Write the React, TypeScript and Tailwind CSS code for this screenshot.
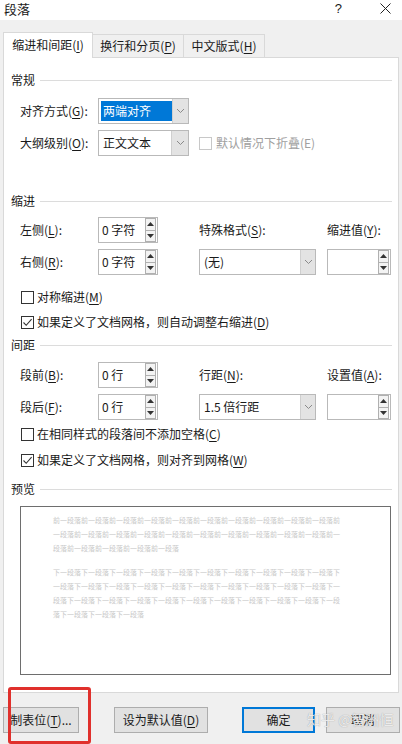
import React from "react";

const U = ({ c }: { c: string }) => (
  <span className="underline underline-offset-[2px] decoration-[1px]">{c}</span>
);

function CheckBox({ checked, disabled }: { checked?: boolean; disabled?: boolean }) {
  return (
    <div
      className={
        disabled
          ? "w-[13px] h-[13px] border border-[#c8c8c8] bg-white flex items-center justify-center"
          : "w-[13px] h-[13px] border border-[#333333] bg-white flex items-center justify-center"
      }
    >
      {checked && (
        <svg width="11" height="11" viewBox="0 0 11 11">
          <polyline points="1.5,5.5 4.2,8.3 9.6,2.2" fill="none" stroke="#333" strokeWidth="1.1" />
        </svg>
      )}
    </div>
  );
}

function Spinner() {
  return (
    <div className="flex flex-col h-[24px] w-[11px] mr-[1px]">
      <div className="flex-1 border border-[#b0b0b0] bg-[#f3f3f3] flex items-center justify-center">
        <svg width="7" height="4" viewBox="0 0 7 4">
          <polygon points="0,4 7,4 3.5,0" fill="#333" />
        </svg>
      </div>
      <div className="flex-1 border border-t-0 border-[#b0b0b0] bg-[#f3f3f3] flex items-center justify-center">
        <svg width="7" height="4" viewBox="0 0 7 4">
          <polygon points="0,0 7,0 3.5,4" fill="#333" />
        </svg>
      </div>
    </div>
  );
}

function SpinBox({ value, wide }: { value?: string; wide?: boolean }) {
  return (
    <div
      className={
        (wide ? "w-[60px]" : "w-[64px]") +
        " h-[26px] border border-[#b9b9b9] bg-white flex items-center justify-between pl-[3px]"
      }
    >
      <span className="text-[12px] leading-[16px] whitespace-pre">{value ?? ""}</span>
      <Spinner />
    </div>
  );
}

function Chevron() {
  return (
    <svg width="9" height="6" viewBox="0 0 9 6">
      <polyline points="1,1 4.5,4.5 8,1" fill="none" stroke="#8a8a8a" strokeWidth="1" />
    </svg>
  );
}

function Dropdown({
  value,
  selected,
  className,
  btnW,
}: {
  value: string;
  selected?: boolean;
  className: string;
  btnW: string;
}) {
  return (
    <div className={className + " h-[26px] border border-[#b9b9b9] bg-white flex items-stretch"}>
      <div className="flex-1 flex items-center pl-[2px]">
        {selected ? (
          <span className="bg-[#0078d7] text-white text-[12px] leading-[20px] w-[71px] pl-[2px]">{value}</span>
        ) : (
          <span className="text-[12px] leading-[16px] pl-[2px]">{value}</span>
        )}
      </div>
      <div className={btnW + " bg-[#e3e3e3] border-l border-[#cfcfcf] flex items-center justify-center"}>
        <Chevron />
      </div>
    </div>
  );
}

function SectionHeader({ title }: { title: string }) {
  return (
    <div className="h-[16px] flex items-center pl-[7px] pr-[6px]">
      <span className="text-[12px] leading-[16px]">{title}</span>
      <div className="flex-1 h-px bg-[#dcdcdc] ml-[5px]" />
    </div>
  );
}

function Label({ children, className }: { children: React.ReactNode; className?: string }) {
  return <span className={"text-[12px] leading-[16px] " + (className ?? "")}>{children}</span>;
}

function CheckRow({ checked, children, className }: { checked?: boolean; children: React.ReactNode; className: string }) {
  return (
    <div className={className + " h-[16px] flex items-center pl-[17px]"}>
      <CheckBox checked={checked} />
      <span className="text-[12px] leading-[16px] ml-[3px]">{children}</span>
    </div>
  );
}

const rep = (s: string, n: number) => Array(n).fill(s).join("");

const previewPrev = [rep("前一段落", 10) + "前", rep("一段落前", 10) + "一", "段落前一段落前一段落前一段落前一段落"];
const previewNext = [
  rep("下一段落", 10) + "下",
  rep("一段落下", 10) + "一",
  rep("段落下一", 10) + "段",
  "落下一段落下一段落下一段落",
];

export default function App() {
  return (
    <div className="relative w-[402px] h-[744px] overflow-hidden bg-[#f0f0f0] text-[#1a1a1a] font-['Noto_Sans_CJK_SC',sans-serif]">
      {/* Title bar */}
      <div className="h-[20px] bg-white flex items-start justify-between pl-[4px] pr-[11px] pt-[1px]">
        <span className="text-[13px] leading-[15px]">段落</span>
        <div className="flex items-start gap-[38px]">
          <span className="text-[13px] leading-[15px] font-['Liberation_Sans',sans-serif]">?</span>
          <svg width="11" height="11" viewBox="0 0 11 11" className="mt-[2px]">
            <line x1="0.5" y1="0.5" x2="10.5" y2="10.5" stroke="#222" strokeWidth="1" />
            <line x1="10.5" y1="0.5" x2="0.5" y2="10.5" stroke="#222" strokeWidth="1" />
          </svg>
        </div>
      </div>

      {/* Tabs */}
      <div className="mt-[11px] pl-[3px] flex items-end h-[26px]">
        <div className="w-[90px] h-[26px] bg-white border border-b-0 border-[#d9d9d9] flex items-center justify-center relative z-10 -mb-px pb-px">
          <span className="text-[12px] leading-[16px]">
            缩进和间距(<U c="I" />)
          </span>
        </div>
        <div className="w-[91px] h-[23px] bg-[#f0f0f0] border border-l-0 border-b-0 border-[#d9d9d9] flex items-center justify-center">
          <span className="text-[12px] leading-[16px]">
            换行和分页(<U c="P" />)
          </span>
        </div>
        <div className="w-[81px] h-[23px] bg-[#f0f0f0] border border-l-0 border-b-0 border-[#d9d9d9] flex items-center justify-center">
          <span className="text-[12px] leading-[16px]">
            中文版式(<U c="H" />)
          </span>
        </div>
      </div>

      {/* Panel */}
      <div className="mx-[3px] h-[636px] bg-white border border-[#d9d9d9] flex flex-col">
        <div className="mt-[14px]">
          <SectionHeader title="常规" />
        </div>

        <div className="mt-[10px] h-[26px] flex items-center pl-[16px]">
          <Label className="w-[78px]">
            对齐方式(<U c="G" />):
          </Label>
          <Dropdown value="两端对齐" selected className="w-[91px]" btnW="w-[17px]" />
        </div>

        <div className="mt-[6px] h-[26px] flex items-center pl-[16px]">
          <Label className="w-[78px]">
            大纲级别(<U c="O" />):
          </Label>
          <Dropdown value="正文文本" className="w-[91px]" btnW="w-[17px]" />
          <div className="ml-[10px] flex items-center">
            <CheckBox disabled />
            <span className="text-[12px] leading-[16px] ml-[4px] text-[#a0a0a0]">默认情况下折叠(E)</span>
          </div>
        </div>

        <div className="mt-[37px]">
          <SectionHeader title="缩进" />
        </div>

        <div className="mt-[8px] h-[26px] flex items-center pl-[16px]">
          <Label className="w-[78px]">
            左侧(<U c="L" />):
          </Label>
          <SpinBox value="0 字符" wide />
          <div className="w-[41px]" />
          <Label className="w-[128px]">
            特殊格式(<U c="S" />):
          </Label>
          <Label>
            缩进值(<U c="Y" />):
          </Label>
        </div>

        <div className="mt-[6px] h-[26px] flex items-center pl-[16px]">
          <Label className="w-[78px]">
            右侧(<U c="R" />):
          </Label>
          <SpinBox value="0 字符" wide />
          <div className="w-[41px]" />
          <Dropdown value="(无)" className="w-[117px]" btnW="w-[15px]" />
          <div className="w-[11px]" />
          <SpinBox />
        </div>

        <CheckRow className="mt-[14px]">
          对称缩进(<U c="M" />)
        </CheckRow>
        <CheckRow className="mt-[9px]" checked>
          如果定义了文档网格，则自动调整右缩进(<U c="D" />)
        </CheckRow>

        <div className="mt-[7px]">
          <SectionHeader title="间距" />
        </div>

        <div className="mt-[9px] h-[26px] flex items-center pl-[16px]">
          <Label className="w-[78px]">
            段前(<U c="B" />):
          </Label>
          <SpinBox value="0 行" wide />
          <div className="w-[41px]" />
          <Label className="w-[128px]">
            行距(<U c="N" />):
          </Label>
          <Label>
            设置值(<U c="A" />):
          </Label>
        </div>

        <div className="mt-[6px] h-[26px] flex items-center pl-[16px]">
          <Label className="w-[78px]">
            段后(<U c="F" />):
          </Label>
          <SpinBox value="0 行" wide />
          <div className="w-[41px]" />
          <Dropdown value="1.5 倍行距" className="w-[117px]" btnW="w-[15px]" />
          <div className="w-[11px]" />
          <SpinBox />
        </div>

        <CheckRow className="mt-[6px]">
          在相同样式的段落间不添加空格(<U c="C" />)
        </CheckRow>
        <CheckRow className="mt-[10px]" checked>
          如果定义了文档网格，则对齐到网格(<U c="W" />)
        </CheckRow>

        <div className="mt-[13px]">
          <SectionHeader title="预览" />
        </div>

        <div className="mt-[9px] ml-[16px] w-[371px] h-[169px] border border-[#6e6e6e] bg-white pl-[32px] pt-[6px]">
          <div className="flex flex-col">
            {previewPrev.map((l, i) => (
              <div key={"p" + i} className="text-[7px] leading-[14px] text-[#c8c8c8] whitespace-nowrap">
                {l}
              </div>
            ))}
          </div>
          <div className="flex flex-col mt-[10px]">
            {previewNext.map((l, i) => (
              <div key={"n" + i} className="text-[7px] leading-[14px] text-[#c8c8c8] whitespace-nowrap">
                {l}
              </div>
            ))}
          </div>
        </div>
      </div>

      {/* Buttons */}
      <div className="mt-[14px] pl-[3px] flex items-center">
        <div className="w-[76px] h-[26px] bg-[#e1e1e1] border border-[#adadad] flex items-center justify-center">
          <span className="text-[12px] leading-[16px]">
            制表位(<U c="T" />)...
          </span>
        </div>
        <div className="ml-[35px] w-[94px] h-[26px] bg-[#e1e1e1] border border-[#adadad] flex items-center justify-center">
          <span className="text-[12px] leading-[16px]">
            设为默认值(<U c="D" />)
          </span>
        </div>
        <div className="ml-[34px] w-[73px] h-[26px] bg-[#e1e1e1] border-2 border-[#0078d7] flex items-center justify-center">
          <span className="text-[12px] leading-[16px]">确定</span>
        </div>
        <div className="ml-[11px] w-[74px] h-[26px] bg-[#e1e1e1] border border-[#adadad] flex items-center justify-center">
          <span className="text-[12px] leading-[16px]">取消</span>
        </div>
      </div>

      {/* Red annotation */}
      <div className="absolute left-[8px] top-[687px] w-[83px] h-[57px] border-[3px] border-[#e0302c] rounded-[3px]" />

      {/* Watermark */}
      <div className="absolute left-[307px] top-[709px] text-[14px] leading-[20px] text-white/80 [text-shadow:0_0_1px_#888888] whitespace-nowrap">
        知乎 @智洲恒
      </div>
    </div>
  );
}
